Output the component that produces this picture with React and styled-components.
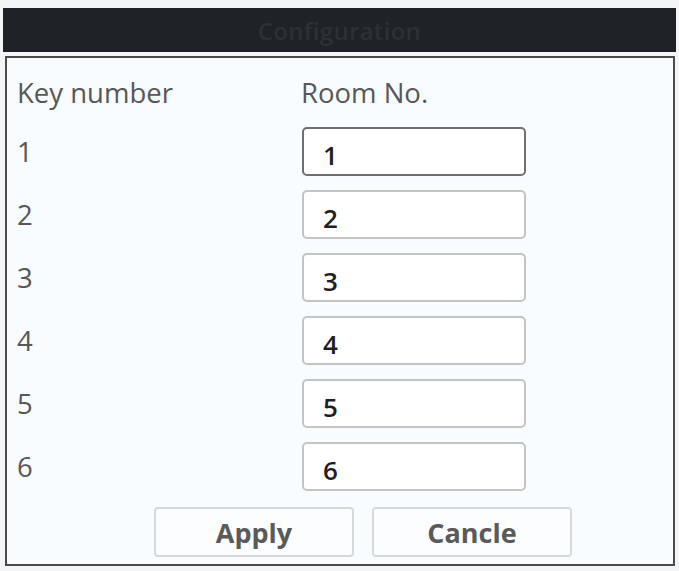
import React from "react";
import styled, { createGlobalStyle } from "styled-components";

const GlobalStyle = createGlobalStyle`
  html, body {
    margin: 0;
    padding: 0;
    background: #f4f5f6;
  }
  body {
    font-family: "Open Sans", "Noto Sans", "Liberation Sans", sans-serif;
  }
`;

const Window = styled.div`
  width: 679px;
  height: 571px;
  display: flex;
  flex-direction: column;
  padding-top: 8px;
  box-sizing: border-box;
`;

const TitleBar = styled.div`
  height: 44px;
  margin: 0 3px;
  background: #1f2327;
  color: #2c3136;
  display: flex;
  align-items: center;
  justify-content: center;
  font-size: 24px;
  font-weight: 600;
  letter-spacing: 0.3px;
`;

const Panel = styled.div`
  margin: 4px 4px 5px 5px;
  flex: 1;
  border: 2px solid #4b4b4b;
  background: #f8fcfe;
  padding: 20px 0 7px 11px;
  display: flex;
  flex-direction: column;
`;

const Grid = styled.div`
  display: grid;
  grid-template-columns: 284px 224px;
  grid-auto-rows: 49px;
  row-gap: 14px;
`;

const Header = styled.div`
  display: grid;
  grid-template-columns: 284px 224px;
  height: 30px;
  align-items: center;
  margin-bottom: 19px;
`;

const Label = styled.div`
  font-size: 27.5px;
  color: #575757;
  display: flex;
  align-items: center;
  line-height: 1;
  margin-left: -1px;
`;

const Field = styled.input`
  box-sizing: border-box;
  width: 224px;
  height: 49px;
  border: 2px solid ${(p) => (p.$active ? "#6f6f6f" : "#c4c4c4")};
  border-radius: 5px;
  background: #ffffff;
  padding: 6px 0 0 19px;
  font-family: "Open Sans", "Noto Sans", sans-serif;
  font-size: 26px;
  font-weight: 600;
  color: #1f1f1f;
  outline: none;
`;

const Actions = styled.div`
  display: flex;
  gap: 18px;
  margin: 16px 0 0 136px;
`;

const Button = styled.button`
  width: 200px;
  height: 50px;
  border: 2px solid #d6d9dc;
  border-radius: 4px;
  background: #fbfdfe;
  font-family: "Open Sans", "Noto Sans", sans-serif;
  font-size: 27px;
  font-weight: 700;
  color: #5a5a5a;
  cursor: pointer;
  padding: 0;
`;

const keys = [1, 2, 3, 4, 5, 6];

export default function App() {
  return (
    <>
      <GlobalStyle />
      <Window>
        <TitleBar>Configuration</TitleBar>
        <Panel>
          <Header>
            <Label>Key number</Label>
            <Label>Room No.</Label>
          </Header>
          <Grid>
            {keys.map((k) => (
              <React.Fragment key={k}>
                <Label>{k}</Label>
                <Field defaultValue={k} $active={k === 1} />
              </React.Fragment>
            ))}
          </Grid>
          <Actions>
            <Button>Apply</Button>
            <Button>Cancle</Button>
          </Actions>
        </Panel>
      </Window>
    </>
  );
}
